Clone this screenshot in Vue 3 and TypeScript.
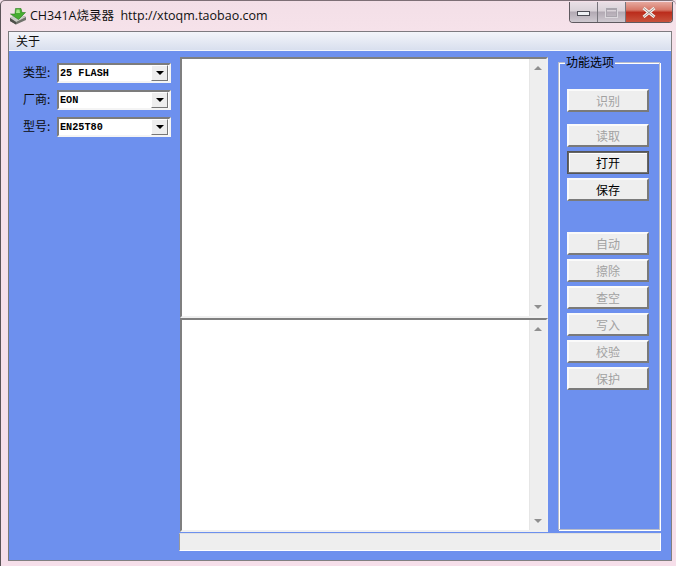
<script setup lang="ts">
interface Btn { label: string; on?: boolean; focus?: boolean; cls?: string }
const fields = [
  { label: '类型', value: '25 FLASH' },
  { label: '厂商', value: 'EON' },
  { label: '型号', value: 'EN25T80' },
]
const top: Btn[] = [{ label: '识别', cls: 'gap-a' }, { label: '读取' }, { label: '打开', on: true, focus: true }, { label: '保存', on: true }]
const bottom: Btn[] = ['自动', '擦除', '查空', '写入', '校验', '保护'].map((label) => ({ label }))
</script>

<template>
  <div class="win">
    <header class="title">
      <svg class="logo" width="18" height="18" viewBox="0 0 18 18">
        <path d="M1 11 9 7l8 3v3L7 17.500 1 14z" fill="#6f726b" />
        <path d="M1 11 8 7l9 3-10 5z" fill="#c9ccc4" />
        <path d="M1 11 7 15v2.500L1 14z" fill="#4d504a" />
        <path d="M6.500 1.500h5.500L13 5.500h3.500L9.500 12.500 1.500 7H6z" fill="#46ad30" stroke="#2c7d20" stroke-width=".6" />
        <path d="M7.500 2.500h3l.5 3.500H7z" fill="#a4e588" />
      </svg>
      <span class="title-text">CH341A烧录器&nbsp;&nbsp;http://xtoqm.taobao.com</span>
      <div class="caps">
        <div class="cap cap-min"><i></i></div>
        <div class="cap cap-max"><i></i></div>
        <div class="cap cap-close">
          <svg width="14" height="11" viewBox="0 0 14 11"><path d="M1.500 1 12.500 10M12.500 1 1.500 10" stroke="#f4f1ee" stroke-width="3" fill="none" /><path d="M1.500 1 12.500 10M12.500 1 1.500 10" stroke="#6b5650" stroke-width=".6" fill="none" /></svg>
        </div>
      </div>
    </header>
    <div class="client">
      <nav class="menu"><span>关于</span></nav>
      <main class="body">
        <div class="cols">
          <aside class="left">
            <div v-for="f in fields" :key="f.label" class="field">
              <label>{{ f.label }}:</label>
              <div class="combo">
                <span>{{ f.value }}</span>
                <b class="drop"><i></i></b>
              </div>
            </div>
          </aside>
          <section class="memos">
            <div v-for="n in ['a', 'b']" :key="n" class="memo" :class="'memo-' + n">
              <div class="text"></div>
              <div class="sbar"><i class="up"></i><i class="down"></i></div>
            </div>
          </section>
          <fieldset class="group">
            <legend>功能选项</legend>
            <div class="btns">
              <button v-for="b in top" :key="b.label" :class="[b.cls, { on: b.on, focus: b.focus }]">{{ b.label }}</button>
            </div>
            <div class="btns lower">
              <button v-for="b in bottom" :key="b.label">{{ b.label }}</button>
            </div>
          </fieldset>
        </div>
        <div class="status"></div>
      </main>
    </div>
  </div>
</template>

<style>
html, body { margin: 0; padding: 0; background: #f5e0ea; }
</style>

<style scoped>
.win {
  width: 676px; height: 566px; box-sizing: border-box; overflow: hidden;
  display: flex; flex-direction: column;
  border-left: 1px solid #5b5458; border-top: 1px solid #7d6f76; border-radius: 5px 5px 0 0;
  padding: 0 4px 5px 7px;
  background: linear-gradient(180deg, #f3dfe7 0, #f6e2ea 30px, #f6dfea 100%);
  font-family: "Noto Sans CJK SC", "Liberation Sans", sans-serif;
  font-size: 12px;
}
.title { height: 30px; flex: none; display: flex; align-items: flex-start; position: relative; }
.logo { margin: 6px 0 0 1px; }
.title-text {
  margin: 6px 0 0 3px; font: 12.500px/18px "Open Sans", "Noto Sans CJK SC", sans-serif; color: #101010;
  white-space: nowrap;
}
.caps {
  margin-left: auto; margin-right: -1px; margin-top: 1px; display: flex; height: 20px;
  border: 1px solid #5f5a60; border-top: 0; border-radius: 0 0 4px 4px; overflow: hidden;
}
.cap { display: flex; align-items: center; justify-content: center; }
.cap-min, .cap-max {
  width: 27px; border-right: 1px solid #77747b;
  background: linear-gradient(180deg, #e9dfe5 0, #d9d2d8 45%, #b2a9b3 50%, #cfc9d0 100%);
}
.cap-min i { display: block; width: 11px; height: 3px; background: #eef0f4; border: 1px solid #4c4c54; margin-top: 3px; }
.cap-max i { display: block; width: 9px; height: 6px; border: 1px solid #aaa5ad; border-top-width: 2px; box-shadow: 0 0 0 1px #dcd8dd; }
.cap-close { width: 46px; background: linear-gradient(180deg, #e6a99f 0, #d67666 40%, #bb2c1c 52%, #c9523c 100%); }
.client { flex: 1; display: flex; flex-direction: column; min-height: 0; border-left: 1px solid #7a7a7a; border-top: 1px solid #7e7a80; border-bottom: 1px solid #808080; border-right: 1px solid #808080; }
.menu {
  height: 18px; flex: none; padding-left: 7px; line-height: 18px; font-size: 12px; color: #111;
  background: linear-gradient(180deg, #f3f5fa 0, #d8dfee 100%); border-bottom: 1px solid #f4f6fb;
}
.body { flex: 1; min-height: 0; background: #6d90ee; display: flex; flex-direction: column; padding: 6px 10px 9px 0; }
.cols { display: flex; flex: 1; min-height: 0; }
.left { width: 171px; flex: none; padding-top: 6px; box-sizing: border-box; display: flex; flex-direction: column; gap: 7px; }
.field { display: flex; align-items: center; height: 20px; padding-left: 14px; }
.field label { width: 34px; font-size: 12px; line-height: 18px; margin-top: -2px; color: #0b0b0b; white-space: nowrap; }
.combo {
  width: 114px; height: 20px; box-sizing: border-box; display: flex; align-items: center; background: #fff;
  border: 2px solid; border-color: #7c7c7c #f4f4f4 #f4f4f4 #7c7c7c; padding: 0 1px;
  font: bold 10.200px/16px "Liberation Mono", monospace; color: #000; white-space: nowrap;
}
.combo span { flex: 1; padding-top: 1px; }
.drop {
  width: 17px; height: 16px; box-sizing: border-box; background: #eeeeee; display: flex; align-items: center; justify-content: center;
  border-right: 1px solid #777; border-bottom: 1px solid #777; border-left: 1px solid #fff; border-top: 1px solid #fff;
}
.drop i { width: 0; height: 0; border: 4px solid transparent; border-top: 4px solid #000; border-bottom: 0; }
.memos { width: 368px; flex: none; display: flex; flex-direction: column; }
.memo { display: flex; border: 2px solid; border-color: #7f7f7f #f0f0f0 #f0f0f0 #7f7f7f; box-sizing: border-box; }
.memo-a { height: 261px; }
.memo-b { height: 214px; border-top-width: 2px; }
.text { flex: 1; background: #fff; }
.sbar {
  width: 17px; flex: none; background: #eeeeee; display: flex; flex-direction: column; justify-content: space-between;
  align-items: center; padding: 7px 0; box-sizing: border-box; border-left: 1px solid #e6e6e6;
}
.up, .down { width: 0; height: 0; border: 4px solid transparent; }
.up { border-bottom: 4px solid #8f8f8f; border-top: 0; }
.down { border-top: 4px solid #8f8f8f; border-bottom: 0; }
.group {
  margin: -1px 0 2px 10px; padding: 0 0 0 8px; width: 102px; box-sizing: border-box; min-width: 0;
  border: 1px solid #b9bdcb; box-shadow: inset 1px 1px 0 #fff, 1px 1px 0 #fff;
  align-self: stretch;
}
.group legend { padding: 0 1px; margin-left: -2px; font-size: 12px; line-height: 12px; color: #000; background: #6d90ee; }
.btns { display: flex; flex-direction: column; gap: 4px; padding-top: 21px; }
.btns.lower { padding-top: 0; margin-top: 31px; }
button {
  width: 82px; height: 23px; box-sizing: border-box; padding: 0; background: #eeeeee; color: #a2a2a2;
  border: 2px solid; border-color: #fafafa #7a7a7a #7a7a7a #fafafa; font: 12px/18px "Noto Sans CJK SC", sans-serif;
}
button.on { color: #000; }
button.focus { outline: 1px solid #555; outline-offset: -1px; border-color: #666 #666 #777 #666; box-shadow: inset 1px 1px 0 #fff; }
.gap-a { margin-bottom: 8px; }
.status {
  margin-left: 170px; height: 18px; flex: none; background: #eeeeee; margin-top: 1px;
  border-top: 1px solid #e0e0e0; border-left: 1px solid #999; border-bottom: 1px solid #fff; border-right: 1px solid #fff; box-sizing: border-box;
}
</style>
